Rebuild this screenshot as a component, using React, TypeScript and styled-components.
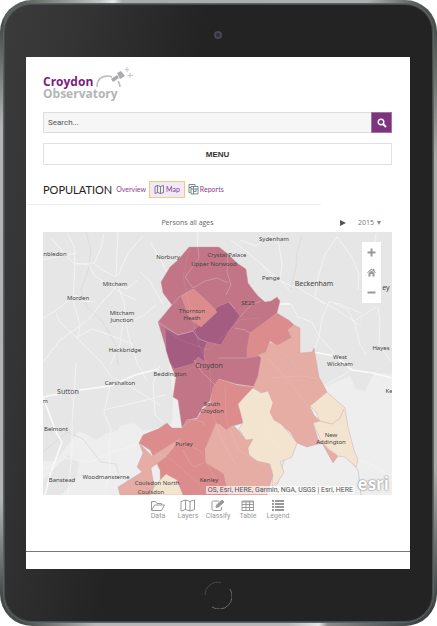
import React from "react";
import styled, { createGlobalStyle } from "styled-components";

const GlobalStyle = createGlobalStyle`
  *, *::before, *::after { box-sizing: border-box; }
  body { margin: 0; background: #fff; font-family: "Open Sans", sans-serif; }
  button, input, select { font: inherit; margin: 0; }
`;

const Shell = styled.div`
  min-height: 100vh;
  padding: 4px;
  display: flex;
  border-radius: 32px;
  background:
    linear-gradient(180deg, #4b514c 5%, #b4b4b4 20%, #b4b4b4 80%, #454b49 95%) left / 4px 100% no-repeat,
    linear-gradient(180deg, #4b514c 5%, #a9aaa6 25%, #a9aaa6 75%, #454b49 95%) right / 4px 100% no-repeat,
    linear-gradient(90deg, #596059 5%, #c4c4c4 23%, #e8e8e8 26%, #aaa 28%, #b0b0b0 84%, #4d534d 97%) top / 100% 50% no-repeat,
    linear-gradient(90deg, #454b49 5%, #b8b8b8 22%, #b8b8b8 66%, #e5e5e5 73%, #8a8a8a 75%, #3c4242 96%) bottom / 100% 50% no-repeat;
`;

const Bezel = styled.div`
  flex: 1;
  min-width: 0;
  display: flex;
  flex-direction: column;
  padding: 0 22px 0 21px;
  border: 1px solid #464b55;
  border-radius: 28px;
  background: linear-gradient(100deg, #3b3b3b 0, #343434 14%, #232323 38%, #232323 100%);
  box-shadow: 0 0 0 1px #5c625f;
`;

const BezelEnd = styled.div`
  height: 52px;
  display: flex;
  align-items: center;
  justify-content: center;
`;

const Camera = styled.span`
  width: 8px;
  height: 8px;
  margin-top: 8px;
  border: 2px solid #484848;
  border-radius: 50%;
  background: #30294c;
`;

const HomeButton = styled.button`
  width: 28px;
  height: 28px;
  padding: 0;
  border: 0;
  background: none;
`;

const Screen = styled.main`
  flex: 1;
  background: #fff;
  display: flex;
  flex-direction: column;
`;

const Header = styled.header`
  padding: 10px 18px 0 17px;
`;

const Brand = styled.a`
  display: flex;
  height: 36px;
  width: 92px;
  text-decoration: none;
  font: 700 12px/12px "Open Sans", sans-serif;
`;

const BrandText = styled.span`
  display: flex;
  flex-direction: column;
  width: 50px;
  padding-top: 9px;
`;

const BrandLine = styled.span<{ $tone: string }>`
  color: ${(p) => p.$tone};
`;

const BrandArt = styled.svg`
  width: 42px;
  height: 24px;
  flex: none;
`;

const SearchForm = styled.form`
  display: flex;
  height: 21px;
  margin-top: 9px;
`;

const SearchInput = styled.input`
  flex: 1;
  min-width: 0;
  padding: 0 4px;
  border: 1px solid #ddd;
  border-right: 0;
  background: #f6f6f6;
  color: #555;
  font: 8px Roboto, sans-serif;
  &::placeholder { color: #555; opacity: 1; }
`;

const SearchButton = styled.button`
  width: 21px;
  padding: 0;
  border: 1px solid #a274a4;
  background: #7d347f;
  color: #fff;
  display: grid;
  place-items: center;
`;

const MenuButton = styled.button`
  width: 100%;
  height: 22px;
  margin-top: 10px;
  padding: 0;
  display: block;
  border: 1px solid #e2e2e2;
  background: #fff;
  color: #333;
  font: 700 8px "Liberation Sans", sans-serif;
`;

const TopicBar = styled.nav`
  display: flex;
  align-items: center;
  height: 40px;
  margin-right: 89px;
  padding: 9px 0 0 17px;
  border-bottom: 1px solid #eee;
`;

const TopicTitle = styled.h1`
  margin: 0 4px 0 0;
  font: 400 11px Lato, sans-serif;
  color: #222;
`;

const TopicLink = styled.a<{ $active?: boolean }>`
  display: flex;
  align-items: center;
  gap: 1px;
  height: 17px;
  margin-right: 3px;
  padding: ${(p) => (p.$active ? "0 4px" : "0")};
  border: ${(p) => (p.$active ? "1px solid #f6c878" : "0")};
  background: ${(p) => (p.$active ? "#efe9fa" : "none")};
  color: #8b3d8f;
  font: 7px Lato, sans-serif;
  text-decoration: none;
`;

const MapHeading = styled.div`
  display: grid;
  grid-template-columns: 1fr auto auto;
  align-items: center;
  height: 27px;
  padding: 8px 29px 0 17px;
  color: #666;
  font: 7px "Open Sans", sans-serif;
`;

const Indicator = styled.h2`
  margin: 0;
  padding-right: 8px;
  font: inherit;
  text-align: center;
`;

const PlayButton = styled.button`
  display: grid;
  padding: 0;
  margin-right: 12px;
  border: 0;
  background: none;
  color: #555;
`;

const YearPicker = styled.label`
  display: flex;
  align-items: center;
  gap: 2px;
`;

const YearSelect = styled.select`
  appearance: none;
  width: 17px;
  padding: 0;
  border: 0;
  background: none;
  color: #777;
`;

const MapFrame = styled.section`
  position: relative;
  margin: 0 18px 0 17px;
`;

const MapDrawing = styled.svg`
  display: block;
  width: 100%;
  height: auto;
`;

const ZoomControls = styled.div`
  position: absolute;
  top: 10px;
  right: 11px;
  width: 19px;
  padding: 0 0 1px;
  background: #fff;
`;

const ZoomButton = styled.button`
  display: grid;
  place-items: center;
  width: 100%;
  height: 20px;
  padding: 0;
  border: 0;
  background: none;
  color: #999;
`;

const Attribution = styled.div`
  position: absolute;
  right: 37px;
  bottom: 1px;
  padding: 0 2px;
  background: rgba(255, 255, 255, 0.65);
  color: #555;
  font: 7px/8px Roboto, sans-serif;
  white-space: nowrap;
`;

const EsriMark = styled.div`
  position: absolute;
  right: 3px;
  bottom: 2px;
  color: #fff;
  font: 700 17px/18px "Open Sans", sans-serif;
  text-shadow: 0 0 2px #777, 0 0 1px #888;
`;

const Toolbar = styled.div`
  display: flex;
  justify-content: center;
  margin-top: 4px;
`;

const Tool = styled.button`
  display: flex;
  flex-direction: column;
  align-items: center;
  width: 30px;
  padding: 0;
  border: 0;
  background: none;
  color: #999;
  font: 7px/9px Roboto, sans-serif;
`;

const Footer = styled.footer`
  height: 18px;
  margin-top: auto;
  border-top: 1px solid #777;
`;

type Shape = { fill: string; d: string };

const ROSE = "#c27586";
const DARK = "#a45d80";
const RED = "#dd8c8d";
const PINK = "#e6ada5";
const CREAM = "#f3e4cf";

const wards: Shape[] = [
  { fill: ROSE, d: "M189 247L219 247L228 254L237 263L246 269L248 283L254 291L258 296L265 302L271 301L277 297L280 301L277 313L257 330L249 348L262 356L258 387L236 384L219 379L214 387L210 401L202 408L197 418L187 420L182 428L178 400L173 397L176 377L172 368L158 322L172 305L163 293L161 282L170 267L178 260Z" },
  { fill: DARK, d: "M158 322L165 328L178 335L193 331L214 312L217 307L229 302L240 316L228 333L221 345L207 342L204 350L205 362L198 357L193 364L174 369L170 363L166 350L165 330Z" },
  { fill: RED, d: "M181 296L194 289L210 304L217 312L201 327L190 319ZM277 313L290 321L294 325L288 330L292 338L278 346L270 341L266 352L259 356L247 358L247 349L250 333ZM219 379L237 385L254 387L247 395L239 404L243 423L233 426L226 430L219 424L205 449L206 461L224 474L228 495L161 495L160 470L150 450L139 443L143 435L150 432L158 429L167 423L172 428L182 428L187 420L197 419L203 409L210 403L213 387Z" },
  { fill: PINK, d: "M278 345L292 337L288 330L294 325L300 328L300 353L312 352L314 348L319 377L327 392L310 407L314 415L320 421L313 423L318 439L322 443L329 450L338 456L333 463L322 443L307 447L297 443L290 432L280 424L270 420L268 403L261 392L253 388L258 376L261 358L258 355L266 352L270 343ZM216 423L227 430L233 425L239 431L246 440L254 439L249 450L258 460L269 463L273 475L267 495L228 495L224 474L206 463L205 449ZM139 443L152 456L181 438L166 457L151 468L154 486L151 495L120 495L118 487L142 472L137 467L143 453Z" },
  { fill: CREAM, d: "M253 388L261 393L268 391L273 403L270 412L274 420L281 424L289 433L297 443L292 457L280 462L284 472L278 482L272 486L273 475L270 464L257 461L249 455L248 448L253 439L246 440L239 429L243 422L238 404L247 394ZM327 392L345 408L348 427L354 450L358 460L356 467L345 457L338 456L322 443L313 423L320 421L316 412L310 406ZM166 474L177 480L183 495L150 495L156 484Z" },
];

const minorRoads =
  "M51 238L73 263L89 265L95 276L112 287L123 294L136 300M67 233L74 246L75 264L73 300L80 325L78 338M43 260L61 256L77 253M75 264L93 263M43 318L55 311L76 295L82 301L95 302M43 362L60 340L77 328L90 318L103 301L111 293L116 286M56 313L60 322L77 338L100 361L112 377M118 286L124 303L128 334L137 363L147 381M93 262L102 270L116 277L118 232M104 233L101 248L94 264M118 276L128 253L143 236M140 272L150 281L163 304M137 280L127 289L118 286M110 386L104 413L111 430L109 447L110 470L104 495M76 363L72 425L72 450L68 495M43 470L66 458L90 462L112 452L142 443M112 377L133 388L160 405M103 410L130 404L165 395M160 366L153 383L155 415L163 422M76 338L92 329L107 334L133 344M110 365L120 345L123 321M151 243L163 264L176 294M156 305L144 315L129 323M198 232L197 253L209 270M231 240L247 252L260 263L280 280L291 292M240 240L256 246L270 235L279 244L282 265L280 280M260 263L272 276L293 287M337 237L325 254L318 278L315 297L340 312L361 326M293 285L312 296L324 304M337 237L352 257L359 275L358 290M376 233L372 265L366 288M361 313L340 304L329 302L322 318L319 337L314 350M334 303L347 309L355 324L360 345L366 354M378 307L380 322L379 345L391 361M354 321L376 307M291 304L298 317L312 322L319 336L332 350L334 355M325 385L345 374L352 368M358 460L373 465L387 474L392 475";
const mainRoads =
  "M43 397L80 390L110 386L135 375L158 369M43 397L56 432L62 442L50 475L45 495M313 352L335 356L352 370L373 373L392 378M280 304L290 304";
const railLines =
  "M86 232L91 250L88 271L81 290L87 307L103 322L116 345L118 365M43 452L67 432L83 439L101 462L116 464L119 475L132 484L157 487M302 237L297 252L296 267L290 292";
const wardLines =
  "M198 247L199 258L185 277L193 288L205 281L217 278L228 283M228 255L227 272L231 285L226 295M181 296L193 289M261 301L251 305L240 317M229 302L235 309M193 331L199 339L207 342M217 387L202 372L194 360M250 333L245 330L235 328M183 450L190 463L194 467L205 462M182 428L192 419L203 422L205 426M219 358L247 358M278 354L289 360L288 364L305 379L317 381M320 421L332 424L340 418L344 409M172 305L180 296M158 322L178 335L193 331";
const builtAreas = "M43 232H392V374L374 373L365 391L356 389L350 376L319 389L280 351L200 300L166 340L173 395L172 423L151 430L143 431L134 423L120 426L117 431L105 434L97 440L79 431L55 461L43 461ZM68 455L79 463L76 480L61 495H43V480Z";

const places: [string, number, number, number?][] = [
  ["nbledon", 55, 256],
  ["Norbury", 168, 259],
  ["Crystal Palace", 227, 257],
  ["Upper Norwood", 214, 266],
  ["Sydenham", 274, 241],
  ["Penge", 271, 280],
  ["Beckenham", 314, 286, 7],
  ["ey", 386, 290, 7],
  ["Mitcham", 115, 286],
  ["Morden", 78, 300],
  ["Mitcham", 122, 315],
  ["Junction", 122, 322],
  ["Hackbridge", 125, 352],
  ["Thornton", 192, 313],
  ["Heath", 192, 320],
  ["SE25", 248, 305],
  ["Hayes", 381, 350],
  ["West", 340, 359],
  ["Wickham", 340, 366],
  ["Beddington", 170, 376],
  ["Croydon", 209, 368, 7],
  ["Carshalton", 120, 385],
  ["Sutton", 68, 394, 7],
  ["South", 212, 406],
  ["Croydon", 212, 413],
  ["Belmont", 56, 431],
  ["Purley", 184, 446],
  ["New", 331, 437],
  ["Addington", 331, 444],
  ["Ke", 389, 393],
  ["Banstead", 62, 482],
  ["Woodmansterne", 106, 479],
  ["Coulsdon North", 157, 485],
  ["Coulsdon", 151, 494],
  ["Kenley", 209, 482],
  ["m", 45, 403],
];

function BoroughMap() {
  return (
    <MapDrawing viewBox="43 232 349 263" role="img" aria-label="Population by area">
      <rect x="43" y="232" width="349" height="263" fill="#eeeeee" />
      <path d={builtAreas} fill="#e6e6e6" />
      <path d="M346 456L358 470L361 495M284 460L278 483L265 495" fill="none" stroke="#d0d0d0" />
      <path d={railLines} fill="none" stroke="#d8d8d8" strokeWidth="0.8" />
      <path d={minorRoads} fill="none" stroke="#f3f3f3" strokeWidth="1" />
      <path d={mainRoads} fill="none" stroke="#fafafa" strokeWidth="1.5" />
      {wards.map((w) => (
        <path key={w.fill} d={w.d} fill={w.fill} stroke="#c9a0a8" strokeWidth="0.4" />
      ))}
      <path d={wardLines} fill="none" stroke="#d3abb2" strokeWidth="0.6" />
      <path
        d="M190 247L183 276L190 310L199 345L210 370L211 410L222 440L236 465M158 323L180 340L209 350L240 320L260 318M225 385L226 420L239 450L265 466M267 358L290 382L307 405L324 430M270 378L301 376L319 378M260 410L271 439L282 450M318 430L344 428M178 441L201 451L220 490M150 450L172 460L206 490M174 377L198 365L221 367"
        fill="none"
        stroke="#fff"
        strokeOpacity="0.08"
      />
      {places.map(([name, x, y, size]) => (
        <text
          key={name + x + y}
          x={x}
          y={y}
          fontSize={size ?? 6}
          fontFamily="Noto Sans, sans-serif"
          textAnchor="middle"
          fill="#444"
        >
          {name}
        </text>
      ))}
    </MapDrawing>
  );
}

const toolIcons = {
  Data: <path d="M1.500 11V2.500h4l1.500 2h4.500V6M1.500 11.500L4.500 6H14.500L11.500 11.500Z" />,
  Layers: <path d="M1 2.500L5.500 1L10 2.500L14.500 1V10.500L10 12L5.500 10.500L1 12ZM5.500 1V10.500M10 2.500V12" />,
  Classify: (
    <>
      <path d="M9 2H3.500Q2 2 2 3.500V10Q2 11.500 3.500 11.500H10Q11.500 11.500 11.500 10V8" />
      <path d="M6 8.500L6.500 6L12 1L14 3L8.500 8Z" fill="currentColor" />
    </>
  ),
  Table: <path d="M2 2H13.500V11.500H2ZM2 3H13.500M2 5.500H13.500M2 8.500H13.500M6 2V11.500M9.500 2V11.500" />,
  Legend: <path d="M2 2H4M5 2H14M2 5H4M5 5H14M2 8H4M5 8H14M2 11H4M5 11H14" strokeWidth="2" />,
};

function ToolButton({ name }: { name: keyof typeof toolIcons }) {
  return (
    <Tool type="button">
      <svg width="16" height="13" viewBox="0 0 16 13" fill="none" stroke="currentColor" strokeLinejoin="round" aria-hidden="true">
        {toolIcons[name]}
      </svg>
      {name}
    </Tool>
  );
}

export default function App() {
  return (
    <>
      <GlobalStyle />
      <Shell>
        <Bezel>
          <BezelEnd>
            <Camera />
          </BezelEnd>
          <Screen>
            <Header>
              <Brand href="#" aria-label="Croydon Observatory">
                <BrandText>
                  <BrandLine $tone="#7b1c7e">Croydon</BrandLine>
                  <BrandLine $tone="#b3b4b7">Observatory</BrandLine>
                </BrandText>
                <BrandArt viewBox="0 0 42 24" aria-hidden="true">
                  <path d="M4 20Q4 9 15 9Q17 9 19 10M25 14Q27 17 27 20" fill="none" stroke="#bcbcbf" strokeWidth="1.500" />
                  <path d="M18 12L24 8L26 11L20 15ZM24 6L28 4L32 9L27 12Z" fill="#aaabae" />
                  <path d="M34 0V5M32 2.500H36M37 6V11M34.500 8.500H40" stroke="#c5c5c8" strokeWidth="1" />
                </BrandArt>
              </Brand>
              <SearchForm onSubmit={(e) => e.preventDefault()}>
                <SearchInput type="text" placeholder="Search..." aria-label="Search" />
                <SearchButton type="submit" aria-label="Search">
                  <svg width="10" height="10" viewBox="0 0 10 10" fill="none" stroke="currentColor" aria-hidden="true">
                    <circle cx="4" cy="4" r="2.800" strokeWidth="1.400" />
                    <path d="M6 6L9 9" strokeWidth="2" />
                  </svg>
                </SearchButton>
              </SearchForm>
              <MenuButton type="button">MENU</MenuButton>
            </Header>
            <TopicBar>
              <TopicTitle>POPULATION</TopicTitle>
              <TopicLink href="#overview">Overview</TopicLink>
              <TopicLink href="#map" $active>
                <svg width="11" height="9" viewBox="0 0 11 9" fill="none" stroke="#666" strokeWidth="0.8" aria-hidden="true">
                  <path d="M1 1.500L3.500 .5L6.500 1.500L9.500 .5V7.500L6.500 8.500L3.500 7.500L1 8.500ZM3.500 .5V7.500M6.500 1.500V8.500" />
                </svg>
                Map
              </TopicLink>
              <TopicLink href="#reports">
                <svg width="11" height="11" viewBox="0 0 11 11" fill="none" stroke="#698080" strokeWidth="0.9" aria-hidden="true">
                  <path d="M2.500 8.500H1V.5H7V2M3 2.500H10V10H3ZM5.500 2.500V10M3 5H10M1 3.500H3M5.500 7.500H8V5" />
                </svg>
                Reports
              </TopicLink>
            </TopicBar>
            <MapHeading>
              <Indicator>Persons all ages</Indicator>
              <PlayButton type="button" aria-label="Play">
                <svg width="6" height="6" viewBox="0 0 6 6" aria-hidden="true">
                  <path d="M0 0L6 3L0 6Z" fill="currentColor" />
                </svg>
              </PlayButton>
              <YearPicker>
                <YearSelect aria-label="Year" defaultValue="2015">
                  <option>2015</option>
                </YearSelect>
                <svg width="4" height="4" viewBox="0 0 4 4" aria-hidden="true">
                  <path d="M0 0H4L2 4Z" fill="#888" />
                </svg>
              </YearPicker>
            </MapHeading>
            <MapFrame>
              <BoroughMap />
              <ZoomControls>
                <ZoomButton type="button" aria-label="Zoom in">
                  <svg width="9" height="9" viewBox="0 0 9 9" aria-hidden="true">
                    <path d="M.5 4.500H8.500M4.500 .5V8.500" stroke="currentColor" strokeWidth="2" />
                  </svg>
                </ZoomButton>
                <ZoomButton type="button" aria-label="Default extent">
                  <svg width="9" height="9" viewBox="0 0 9 9" fill="currentColor" aria-hidden="true">
                    <path d="M0 4.500L4.500 .5L6 2V1H7.500V3L9 4.500L8.500 5L4.500 2L.5 5ZM1.500 5L4.500 2.800L7.500 5V8.500H5.500V6H3.500V8.500H1.500Z" />
                  </svg>
                </ZoomButton>
                <ZoomButton type="button" aria-label="Zoom out">
                  <svg width="9" height="9" viewBox="0 0 9 9" aria-hidden="true">
                    <path d="M.5 4.500H8.500" stroke="currentColor" strokeWidth="2" />
                  </svg>
                </ZoomButton>
              </ZoomControls>
              <Attribution>OS, Esri, HERE, Garmin, NGA, USGS | Esri, HERE</Attribution>
              <EsriMark>esri</EsriMark>
            </MapFrame>
            <Toolbar>
              <ToolButton name="Data" />
              <ToolButton name="Layers" />
              <ToolButton name="Classify" />
              <ToolButton name="Table" />
              <ToolButton name="Legend" />
            </Toolbar>
            <Footer />
          </Screen>
          <BezelEnd>
            <HomeButton type="button" aria-label="Home">
              <svg width="28" height="28" viewBox="0 0 28 28" fill="none" aria-hidden="true">
                <path d="M1 14A13 13 0 0 1 17 1.500" stroke="#474747" />
                <path d="M26 8A13 13 0 0 1 8 26" stroke="#696969" />
              </svg>
            </HomeButton>
          </BezelEnd>
        </Bezel>
      </Shell>
    </>
  );
}
